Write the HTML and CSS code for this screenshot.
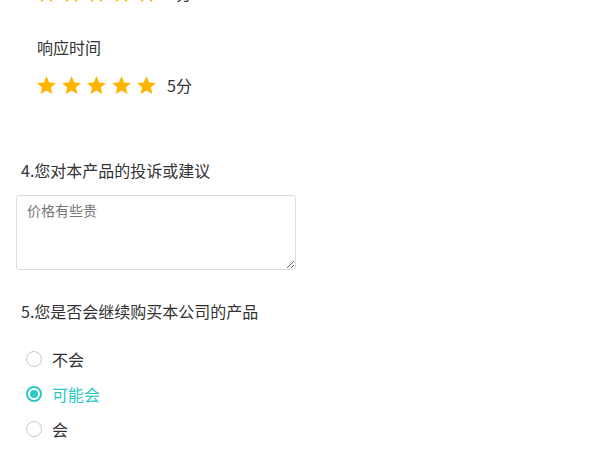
FILE: index.html
```html
<!DOCTYPE html>
<html lang="zh-CN">
<head>
<meta charset="utf-8">
<link rel="stylesheet" href="styles.css">
</head>
<body>
<div class="page">
  <div class="rates">
    <div class="rate-item">
      <div class="rate-label">服务态度</div>
      <div class="stars">
        <svg class="star" viewBox="0 0 24 24"><path d="M12 1.5l3.1 7 7.6.7-5.7 5 1.7 7.5L12 17.8l-6.7 3.9 1.7-7.5-5.7-5 7.6-.7z"/></svg>
        <svg class="star" viewBox="0 0 24 24"><path d="M12 1.5l3.1 7 7.6.7-5.7 5 1.7 7.5L12 17.8l-6.7 3.9 1.7-7.5-5.7-5 7.6-.7z"/></svg>
        <svg class="star" viewBox="0 0 24 24"><path d="M12 1.5l3.1 7 7.6.7-5.7 5 1.7 7.5L12 17.8l-6.7 3.9 1.7-7.5-5.7-5 7.6-.7z"/></svg>
        <svg class="star" viewBox="0 0 24 24"><path d="M12 1.5l3.1 7 7.6.7-5.7 5 1.7 7.5L12 17.8l-6.7 3.9 1.7-7.5-5.7-5 7.6-.7z"/></svg>
        <svg class="star" viewBox="0 0 24 24"><path d="M12 1.5l3.1 7 7.6.7-5.7 5 1.7 7.5L12 17.8l-6.7 3.9 1.7-7.5-5.7-5 7.6-.7z"/></svg>
        <span class="score">5分</span>
      </div>
    </div>
    <div class="rate-item">
      <div class="rate-label">响应时间</div>
      <div class="stars">
        <svg class="star" viewBox="0 0 24 24"><path d="M12 1.5l3.1 7 7.6.7-5.7 5 1.7 7.5L12 17.8l-6.7 3.9 1.7-7.5-5.7-5 7.6-.7z"/></svg>
        <svg class="star" viewBox="0 0 24 24"><path d="M12 1.5l3.1 7 7.6.7-5.7 5 1.7 7.5L12 17.8l-6.7 3.9 1.7-7.5-5.7-5 7.6-.7z"/></svg>
        <svg class="star" viewBox="0 0 24 24"><path d="M12 1.5l3.1 7 7.6.7-5.7 5 1.7 7.5L12 17.8l-6.7 3.9 1.7-7.5-5.7-5 7.6-.7z"/></svg>
        <svg class="star" viewBox="0 0 24 24"><path d="M12 1.5l3.1 7 7.6.7-5.7 5 1.7 7.5L12 17.8l-6.7 3.9 1.7-7.5-5.7-5 7.6-.7z"/></svg>
        <svg class="star" viewBox="0 0 24 24"><path d="M12 1.5l3.1 7 7.6.7-5.7 5 1.7 7.5L12 17.8l-6.7 3.9 1.7-7.5-5.7-5 7.6-.7z"/></svg>
        <span class="score">5分</span>
      </div>
    </div>
  </div>

  <div class="question q4">
    <div class="q-title">4.您对本产品的投诉或建议</div>
    <textarea class="suggest" placeholder="价格有些贵"></textarea>
  </div>

  <div class="question q5">
    <div class="q-title">5.您是否会继续购买本公司的产品</div>
    <div class="radios">
      <label class="radio"><span class="circle"></span><span class="r-text">不会</span></label>
      <label class="radio checked"><span class="circle"></span><span class="r-text">可能会</span></label>
      <label class="radio"><span class="circle"></span><span class="r-text">会</span></label>
    </div>
  </div>
</div>
</body>
</html>
```

FILE: styles.css
```css
* { box-sizing: border-box; }
html, body { margin: 0; padding: 0; background: #fff; }
body {
  font-family: "Noto Sans CJK SC", "Noto Sans", sans-serif;
  font-size: 16px;
  color: #333;
  overflow: hidden;
}
.page {
  margin-top: -57px;
}
.rates {
  padding-left: 37px;
}
.rate-item {
  margin-bottom: 30px;
}
.rate-item:last-child { margin-bottom: 0; }
.rate-label {
  height: 24px;
  line-height: 24px;
  font-size: 16px;
  margin-bottom: 14px;
}
.stars {
  display: flex;
  align-items: center;
  height: 24px;
}
.star {
  width: 21px;
  height: 21px;
  margin-right: 4px;
  fill: #ffb400;
  flex: none;
}
.star:first-child { margin-left: -1px; }
.score {
  margin-left: 6px;
  font-size: 16px;
  line-height: 24px;
}
.question {
  padding-left: 21px;
}
.q4 { margin-top: 61px; }
.q-title {
  height: 24px;
  line-height: 24px;
  font-size: 16px;
}
.suggest {
  display: block;
  margin: 13px 0 0 -5px;
  width: 280px;
  height: 75px;
  border: 1px solid #dcdcdc;
  border-radius: 3px;
  padding: 4px 10px;
  font-family: "Noto Sans CJK SC", "Noto Sans", sans-serif;
  font-size: 14px;
  line-height: 20px;
  color: #333;
  outline: none;
}
.suggest::placeholder { color: #777; }
.q5 { margin-top: 29px; }
.radios {
  margin-top: 18px;
  margin-left: 5px;
  display: flex;
  flex-direction: column;
}
.radio {
  display: flex;
  align-items: center;
  height: 35px;
}
.circle {
  flex: none;
  width: 16px;
  height: 16px;
  border: 1.5px solid #c8c8c8;
  border-radius: 50%;
  margin-right: 10px;
  display: flex;
  align-items: center;
  justify-content: center;
}
.r-text { font-size: 16px; line-height: 24px; }
.radio.checked .circle {
  border: 2px solid #2ec9c6;
}
.radio.checked .circle::after {
  content: "";
  width: 8px;
  height: 8px;
  border-radius: 50%;
  background: #2ec9c6;
}
.radio.checked .r-text { color: #2ec9c6; }
```
